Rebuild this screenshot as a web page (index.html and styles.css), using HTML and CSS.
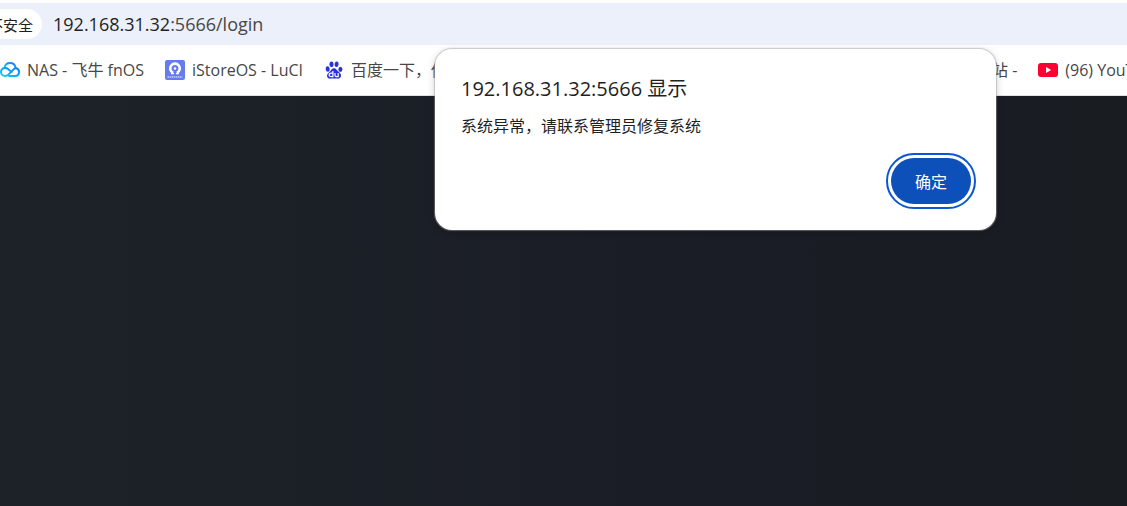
FILE: index.html
```html
<!DOCTYPE html>
<html lang="zh-CN">
<head>
  <meta charset="UTF-8" />
  <meta name="viewport" content="width=device-width, initial-scale=1.0" />
  <title>192.168.31.32:5666/login</title>
  <link rel="stylesheet" href="styles.css">
</head>
<body>
  <header class="address-bar">
    <button class="security-chip" type="button">不安全</button>
    <div class="url"><span class="url-host">192.168.31.32</span>:5666/login</div>
  </header>

  <nav class="bookmarks">
    <div class="bookmarks-left">
      <a class="bookmark" href="#">
        <svg class="icon" viewBox="0 0 20 20" fill="none" stroke-width="2" stroke-linecap="round" stroke-linejoin="round">
          <defs>
            <linearGradient id="cloud" x1="0" y1="1" x2="1" y2="0">
              <stop offset="0" stop-color="#12d5ea" />
              <stop offset=".5" stop-color="#08a6ff" />
              <stop offset="1" stop-color="#1677ff" />
            </linearGradient>
          </defs>
          <path stroke="url(#cloud)" d="M4.500 8C5 5 7.200 3 10 3s5.200 2 5.600 5" />
          <path stroke="url(#cloud)" d="M11.500 12 8.300 9.200C7.300 8.300 6.300 8 5 8 2.700 8 1 9.700 1 12s1.700 4 4 4c1.600 0 2.600-.5 3.700-1.600l4.600-4.800C14.200 8.600 14.600 8.200 16 8.300c1.800.2 3 1.800 3 3.700 0 2.300-1.600 4-3.800 4H9" />
        </svg>
        <span>NAS - 飞牛 fnOS</span>
      </a>
      <a class="bookmark" href="#">
        <svg class="icon" viewBox="0 0 20 20">
          <rect width="20" height="20" rx="2" fill="#667ceb" />
          <path fill="none" stroke="#fff" stroke-width="2.600" d="M8 12.800A4.800 4.800 0 1 1 12 12.800" />
          <circle cx="10" cy="8.500" r="1.200" fill="#fff" />
          <path stroke="#fff" stroke-width="1.500" d="M6 13.500h3M11 13.500h3" />
          <path stroke="#c9d0ff" stroke-width="1.600" stroke-dasharray="1.500 .6" d="M2.500 17h15" />
        </svg>
        <span>iStoreOS - LuCI</span>
      </a>
      <a class="bookmark" href="#">
        <svg class="icon" viewBox="0 0 20 20" fill="#2932e1">
          <ellipse cx="3.700" cy="9" rx="2" ry="2.700" transform="rotate(-12 3.700 9)" />
          <ellipse cx="7.500" cy="4.200" rx="2" ry="2.800" />
          <ellipse cx="12.600" cy="4.300" rx="2" ry="2.800" transform="rotate(10 12.600 4.300)" />
          <ellipse cx="16.400" cy="9.300" rx="2" ry="2.600" />
          <path d="M10 8.200c2.200 0 2.800 2 4.300 3.400 1.600 1.500 3.100 2.500 2.700 4.500-.4 2.200-2.200 2.800-4 2.500-2-.3-4-.3-6 0-2.200.3-3.900-.7-4-2.900-.1-1.900 1.600-2.800 3-4.200 1.300-1.400 2-3.300 4-3.300Z" />
          <path fill="none" stroke="#fff" stroke-width="1.200" d="M8.900 11v5.700H7.200c-2.700 0-2.700-3.500 0-3.500h1.700M11 13v2.200c0 1 .4 1.500 1.400 1.500h1.800V13" />
        </svg>
        <span>百度一下，你</span>
      </a>
    </div>
    <div class="bookmarks-right">
      <a class="bookmark" href="#">站 -</a>
      <a class="bookmark" href="#">
        <svg class="icon" viewBox="0 0 20 20">
          <rect y="3" width="20" height="14" rx="3" fill="#ff0033" />
          <path fill="#fff" d="m8 7 5.200 3L8 13Z" />
        </svg>
        <span>(96) YouTube</span>
      </a>
    </div>
  </nav>

  <main class="page"></main>

  <dialog class="alert" open aria-labelledby="alertTitle">
    <h1 id="alertTitle">192.168.31.32:5666 显示</h1>
    <p>系统异常，请联系管理员修复系统</p>
    <form class="alert-actions" method="dialog">
      <button class="confirm" type="submit">确定</button>
    </form>
  </dialog>
</body>
</html>
```

FILE: styles.css
```css
:root {
  --bar: #ecf0fa;
  --text: #1f1f1f;
  --text-soft: #474747;
  --blue: #0b57d0;
}

* {
  box-sizing: border-box;
}

body {
  display: flex;
  flex-direction: column;
  min-height: 100vh;
  margin: 0;
  overflow: hidden;
  background: #fff;
  color: var(--text);
  font-family: "Open Sans", "Noto Sans CJK SC", sans-serif;
}

.address-bar {
  display: flex;
  align-items: center;
  gap: 11px;
  height: 42px;
  margin-top: 3px;
  background: var(--bar);
}

.security-chip {
  height: 30px;
  margin-left: -20px;
  padding: 0 9px 0 8px;
  border: none;
  border-radius: 15px;
  background: #fff;
  color: var(--text);
  font-family: inherit;
  font-size: 15px;
  white-space: nowrap;
}

.url {
  color: var(--text-soft);
  font-size: 18px;
}

.url-host {
  color: var(--text);
}

.bookmarks {
  display: flex;
  height: 51px;
  border-bottom: 1px solid #dfe1e5;
  overflow: hidden;
}

.bookmarks-left,
.bookmarks-right {
  display: flex;
  flex: none;
  align-items: center;
  gap: 21px;
}

.bookmarks-left {
  width: 992px;
}

.bookmark {
  display: flex;
  align-items: center;
  gap: 7px;
  color: var(--text-soft);
  font-size: 16px;
  line-height: 22px;
  text-decoration: none;
  white-space: nowrap;
}

.icon {
  flex: none;
  width: 20px;
  height: 20px;
}

.page {
  flex: 1;
  background: linear-gradient(90deg, #1d2228, #1a1d25 60%, #191c21);
}

.alert {
  position: absolute;
  top: 49px;
  left: 435px;
  width: 561px;
  margin: 0;
  padding: 25px 25px 26px 26px;
  border: none;
  border-radius: 17px;
  background: #fff;
  color: var(--text);
  box-shadow: 0 0 1px 1px rgba(160, 165, 165, 0.5), 0 2px 8px rgba(0, 0, 0, 0.2);
}

.alert h1 {
  margin: 0 0 10px;
  font-size: 20px;
  font-weight: 400;
  line-height: 30px;
}

.alert p {
  margin: 0;
  font-size: 16px;
  line-height: 24px;
}

.alert-actions {
  display: flex;
  justify-content: flex-end;
  margin-top: 20px;
}

.confirm {
  width: 80px;
  height: 46px;
  border: none;
  border-radius: 23px;
  outline: 2px solid var(--blue);
  outline-offset: 3px;
  background: #0d50b9;
  color: #fff;
  font-family: inherit;
  font-size: 16px;
  cursor: pointer;
}
```
